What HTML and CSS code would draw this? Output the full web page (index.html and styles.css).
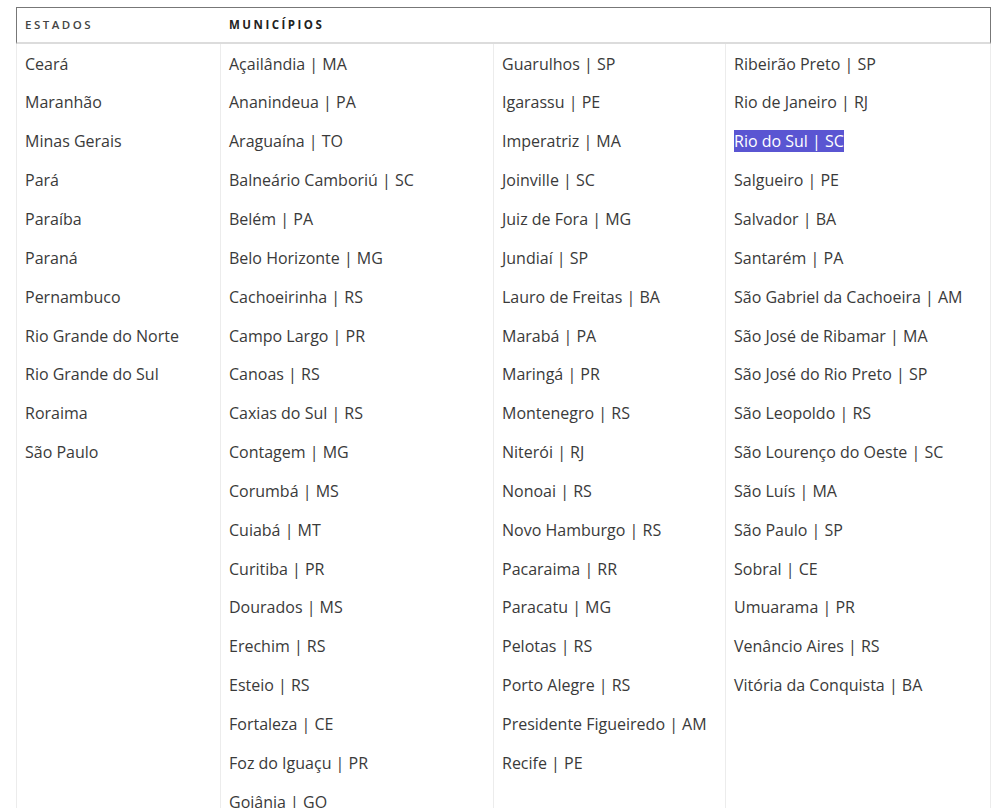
FILE: index.html
```html
<!DOCTYPE html>
<html lang="pt-BR">
<head>
<meta charset="utf-8">
<title>Estados e Municípios</title>
<link rel="stylesheet" href="styles.css">
</head>
<body>
<div class="table">
  <div class="head">
    <div class="th th-estados">ESTADOS</div>
    <div class="th th-mun">MUNICÍPIOS</div>
  </div>
  <div class="body">
    <ul class="col c1">
      <li>Ceará</li><li>Maranhão</li><li>Minas Gerais</li><li>Pará</li><li>Paraíba</li><li>Paraná</li><li>Pernambuco</li><li>Rio Grande do Norte</li><li>Rio Grande do Sul</li><li>Roraima</li><li>São Paulo</li>
    </ul>
    <ul class="col c2">
      <li>Açailândia | MA</li><li>Ananindeua | PA</li><li>Araguaína | TO</li><li>Balneário Camboriú | SC</li><li>Belém | PA</li><li>Belo Horizonte | MG</li><li>Cachoeirinha | RS</li><li>Campo Largo | PR</li><li>Canoas | RS</li><li>Caxias do Sul | RS</li><li>Contagem | MG</li><li>Corumbá | MS</li><li>Cuiabá | MT</li><li>Curitiba | PR</li><li>Dourados | MS</li><li>Erechim | RS</li><li>Esteio | RS</li><li>Fortaleza | CE</li><li>Foz do Iguaçu | PR</li><li>Goiânia | GO</li>
    </ul>
    <ul class="col c3">
      <li>Guarulhos | SP</li><li>Igarassu | PE</li><li>Imperatriz | MA</li><li>Joinville | SC</li><li>Juiz de Fora | MG</li><li>Jundiaí | SP</li><li>Lauro de Freitas | BA</li><li>Marabá | PA</li><li>Maringá | PR</li><li>Montenegro | RS</li><li>Niterói | RJ</li><li>Nonoai | RS</li><li>Novo Hamburgo | RS</li><li>Pacaraima | RR</li><li>Paracatu | MG</li><li>Pelotas | RS</li><li>Porto Alegre | RS</li><li>Presidente Figueiredo | AM</li><li>Recife | PE</li>
    </ul>
    <ul class="col c4">
      <li>Ribeirão Preto | SP</li><li>Rio de Janeiro | RJ</li><li><span class="sel">Rio do Sul | SC</span></li><li>Salgueiro | PE</li><li>Salvador | BA</li><li>Santarém | PA</li><li>São Gabriel da Cachoeira | AM</li><li>São José de Ribamar | MA</li><li>São José do Rio Preto | SP</li><li>São Leopoldo | RS</li><li>São Lourenço do Oeste | SC</li><li>São Luís | MA</li><li>São Paulo | SP</li><li>Sobral | CE</li><li>Umuarama | PR</li><li>Venâncio Aires | RS</li><li>Vitória da Conquista | BA</li>
    </ul>
  </div>
</div>
</body>
</html>
```

FILE: styles.css
```css
html, body {
  margin: 0;
  padding: 0;
  background: #fff;
}
body {
  font-family: "Open Sans", "Noto Sans", sans-serif;
  color: #3a3a3a;
}
.table {
  margin: 7px 0 0 16px;
  width: 975px;
}
.head {
  display: grid;
  grid-template-columns: 204px 1fr;
  border: 1px solid #777;
  border-bottom: 2px solid #dcdcdc;
  height: 34px;
  align-items: center;
}
.th {
  font-size: 11.5px;
  letter-spacing: 2.5px;
  padding-left: 8px;
  line-height: 16px;
}
.th-estados {
  font-weight: 600;
  color: #444;
}
.th-mun {
  font-weight: 700;
  color: #222;
}
.body {
  display: grid;
  grid-template-columns: 204px 273px 232px 266px;
  min-height: 820px;
}
.col {
  list-style: none;
  margin: 0;
  padding: 0.6px 0 0 8px;
  border-left: 1px solid #ececec;
  font-size: 16px;
  line-height: 38.85px;
  white-space: nowrap;
}
.c4 {
  border-right: 1px solid #ececec;
}
.sel {
  background: #5a55d2;
  color: #fff;
}
```
